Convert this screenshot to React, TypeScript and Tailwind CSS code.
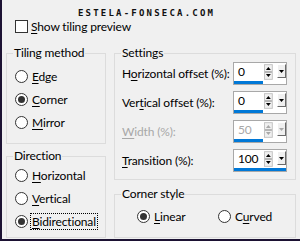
import type { ReactNode } from 'react'

const FONT = "font-['Lato',sans-serif] text-[12px] tracking-[-0.15px] text-black"

function Key({ children }: { children: ReactNode }) {
  return <span className="underline underline-offset-[2px] decoration-[1px]">{children}</span>
}

function Radio({ checked, children, focus }: { checked?: boolean; children: ReactNode; focus?: boolean }) {
  return (
    <div className="flex items-center gap-[3px]">
      <span className="w-[13px] h-[13px] rounded-full border border-[#333] bg-white flex items-center justify-center shrink-0">
        {checked && <span className="w-[7px] h-[7px] rounded-full bg-[#333]" />}
      </span>
      <span className={focus ? 'outline outline-1 outline-dotted outline-black px-[1px] leading-[15px]' : 'px-[1px] leading-[15px]'}>
        {children}
      </span>
    </div>
  )
}

function Group({ title, className, children }: { title: string; className?: string; children: ReactNode }) {
  return (
    <fieldset className={`border border-[#dcdcdc] px-[6px] ${className ?? ''}`}>
      <legend className="px-[1px] leading-[16px]">{title}</legend>
      {children}
    </fieldset>
  )
}

function Spin({ disabled }: { disabled?: boolean }) {
  const c = disabled ? '#a8a8a8' : '#000'
  return (
    <svg width="9" height="16" viewBox="0 0 9 16">
      <rect x="0.5" y="0.5" width="8" height="15" fill="#f0f0f0" stroke="#c4c4c4" />
      <line x1="1" y1="8" x2="8" y2="8" stroke="#7a7a7a" />
      <path d="M2 6 L4.5 3 L7 6 Z" fill={c} />
      <path d="M2 10 L4.5 13 L7 10 Z" fill={c} />
    </svg>
  )
}

function NumberField({ value, bar, disabled }: { value: string; bar: number; disabled?: boolean }) {
  return (
    <div className="w-[54px] h-[23px] bg-white border border-[#a8a8a8] flex flex-col">
      <div className="h-[18px] flex items-center">
        <span className={`pl-[4px] w-[31px] leading-[18px] ${disabled ? 'text-[#a8a8a8]' : ''}`}>{value}</span>
        <Spin disabled={disabled} />
        <div className="ml-[4px] w-[9px] h-[14px] self-start mt-[1px] bg-[#f0f0f0] border-t border-l border-t-white border-l-white border-r border-b border-r-[#6a6a6a] border-b-[#6a6a6a] flex items-center justify-center">
          <svg width="5" height="3" viewBox="0 0 5 3">
            <path d="M0 0 L5 0 L2.5 3 Z" fill={disabled ? '#a8a8a8' : '#000'} />
          </svg>
        </div>
      </div>
      <div className="h-[3px] bg-[#0078d7]" style={{ width: bar }} />
    </div>
  )
}

function Row({ label, children, disabled }: { label: ReactNode; children: ReactNode; disabled?: boolean }) {
  return (
    <div className="flex items-center h-[23px]">
      <span className={`w-[112px] pl-[1px] whitespace-nowrap ${disabled ? 'text-[#a8a8a8]' : ''}`}>{label}</span>
      {children}
    </div>
  )
}

export default function App() {
  return (
    <div className={`w-[300px] h-[241px] bg-[#1c1233] pl-[2px] pr-[3px] pb-[2px] flex ${FONT}`}>
      <div className="flex-1 bg-[#f0f0f0] flex flex-col">
        <div className="h-[20px] pt-[9px] pl-[76px] font-['DejaVu_Sans_Mono',monospace] font-bold text-[9px] leading-[9px] tracking-[2.2px] text-[#111]">
          ESTELA-FONSECA.COM
        </div>
        <div className="h-[13px] flex items-center pl-[13px] gap-[3px]">
          <span className="w-[13px] h-[13px] border border-[#333] bg-white" />
          <span>
            <Key>S</Key>how tiling preview
          </span>
        </div>

        <div className="flex gap-[8px] px-[4px] mt-[12px]">
          <div className="w-[100px] flex flex-col">
            <Group title="Tiling method" className="pb-[9px]">
              <div className="pt-[4px] pl-[2px] flex flex-col">
                <div className="h-[23px] flex items-center"><Radio><Key>E</Key>dge</Radio></div>
                <div className="h-[23px] flex items-center"><Radio checked><Key>C</Key>orner</Radio></div>
                <div className="h-[23px] flex items-center"><Radio><Key>M</Key>irror</Radio></div>
              </div>
            </Group>
            <Group title="Direction" className="mt-[4px] pb-[4px]">
              <div className="pl-[2px] flex flex-col">
                <div className="h-[23px] flex items-center"><Radio><Key>H</Key>orizontal</Radio></div>
                <div className="h-[23px] flex items-center"><Radio><Key>V</Key>ertical</Radio></div>
                <div className="h-[23px] flex items-center"><Radio checked focus><Key>B</Key>idirectional</Radio></div>
              </div>
            </Group>
          </div>

          <div className="w-[182px] flex flex-col">
            <Group title="Settings" className="pb-[7px]">
              <div className="mt-[1px] flex flex-col gap-[6px]">
                <Row label={<>H<Key>o</Key>rizontal offset (%):</>}>
                  <NumberField value="0" bar={29} />
                </Row>
                <Row label={<>Ver<Key>t</Key>ical offset (%):</>}>
                  <NumberField value="0" bar={29} />
                </Row>
                <Row disabled label={<><Key>W</Key>idth (%):</>}>
                  <NumberField value="50" bar={29} disabled />
                </Row>
                <Row label={<><Key>T</Key>ransition (%):</>}>
                  <NumberField value="100" bar={52} />
                </Row>
              </div>
            </Group>
            <Group title="Corner style" className="mt-[6px] pb-[9px]">
              <div className="mt-[2px] h-[24px] flex items-center pl-[16px]">
                <div className="w-[81px]"><Radio checked><Key>L</Key>inear</Radio></div>
                <Radio>C<Key>u</Key>rved</Radio>
              </div>
            </Group>
          </div>
        </div>
      </div>
    </div>
  )
}
